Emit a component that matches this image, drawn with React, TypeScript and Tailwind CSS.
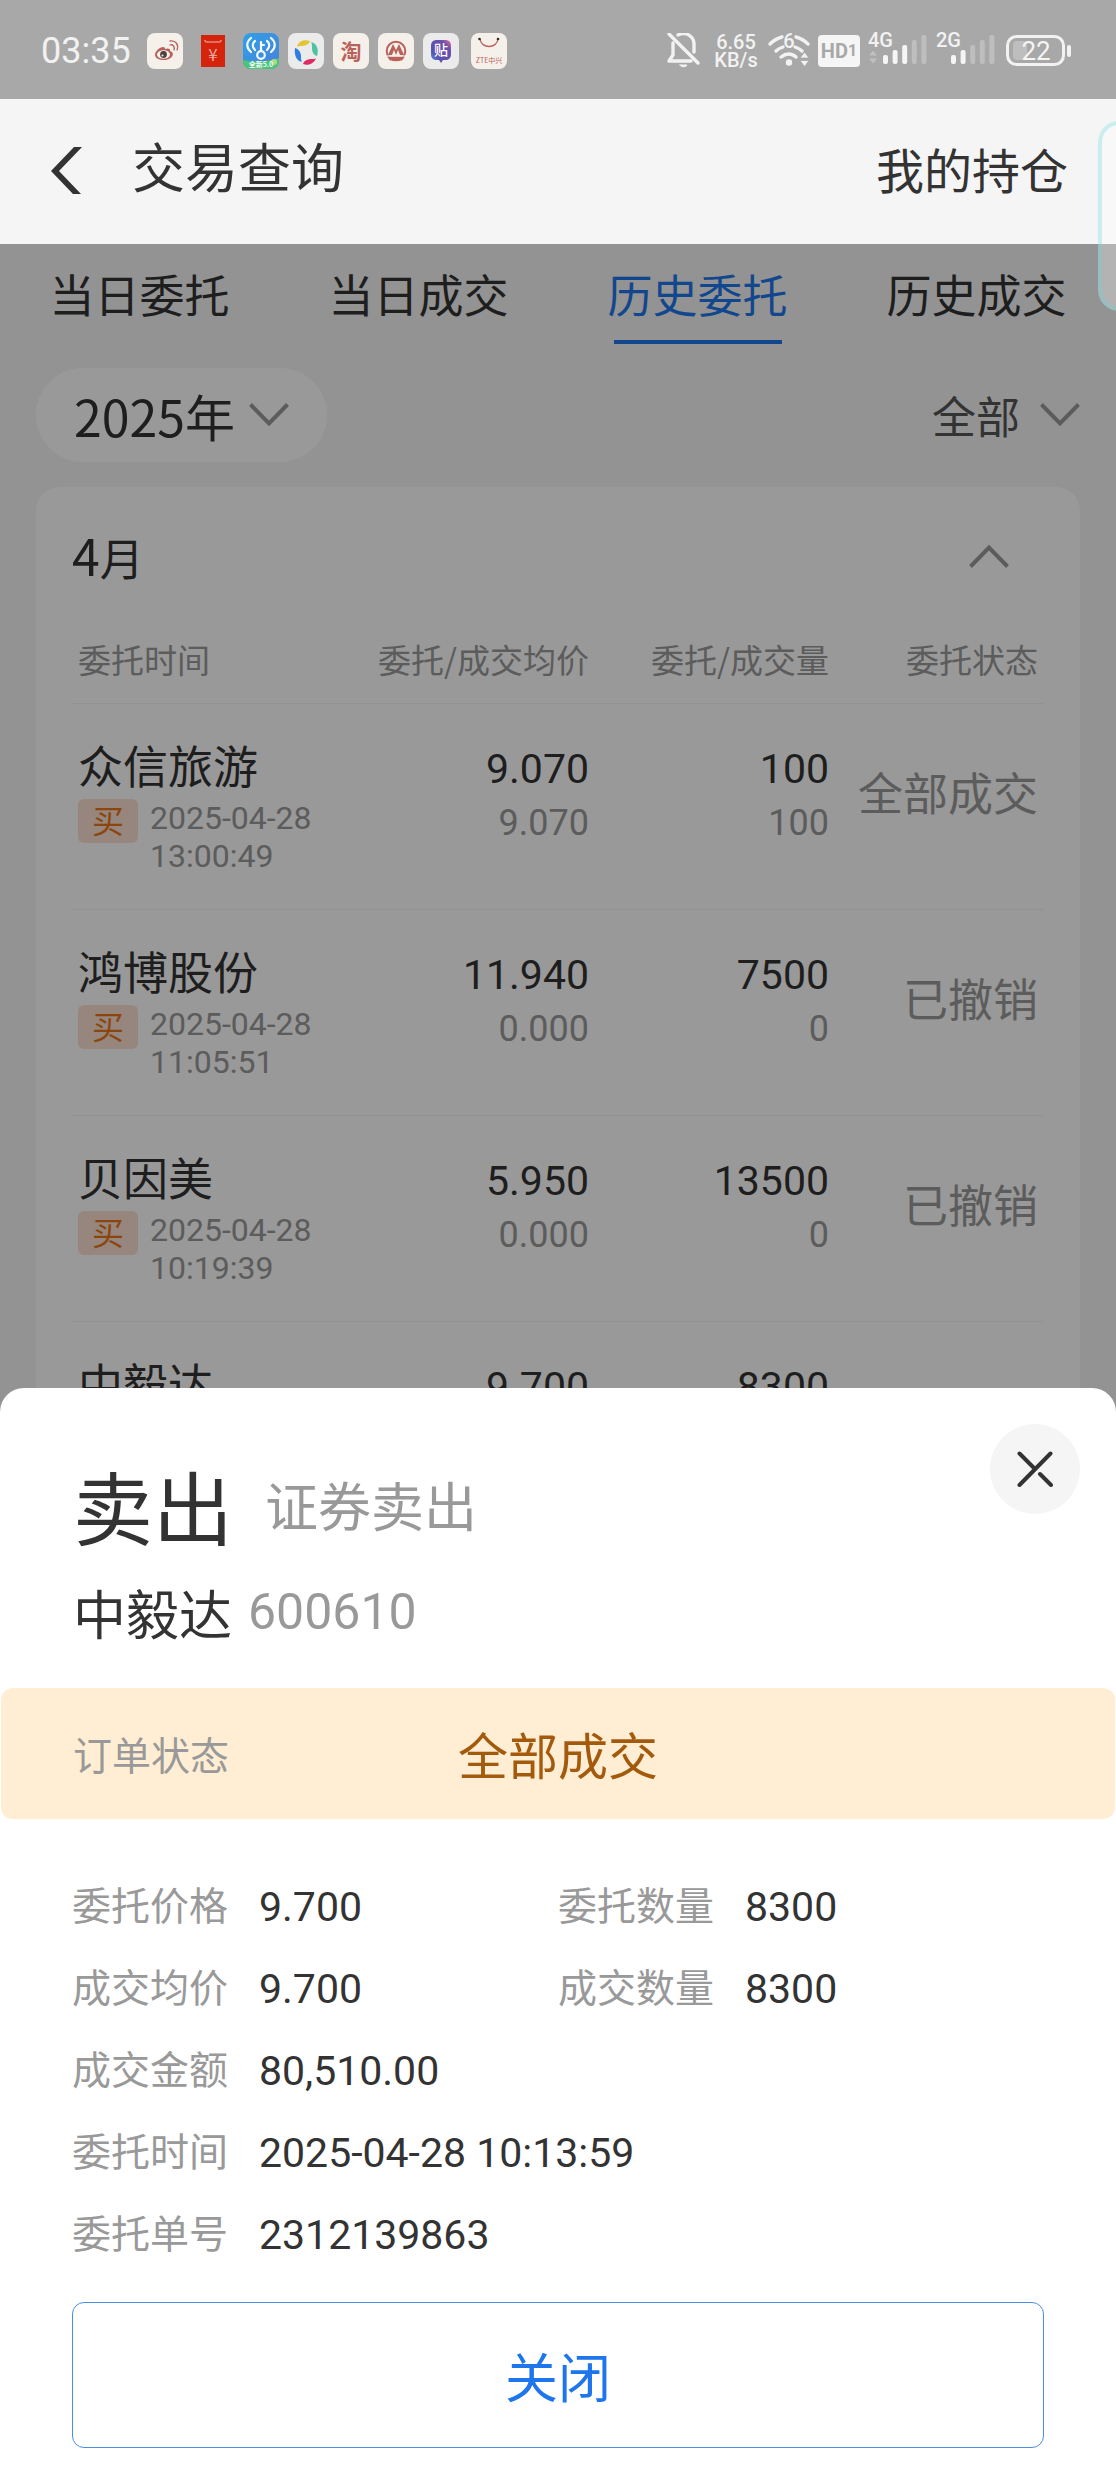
import React, { useState } from 'react';

type Order = {
    name: string;
    date: string;
    time: string;
    price: string;
    avgPrice: string;
    amount: string;
    filled: string;
    status: string;
};

const TABS = ['当日委托', '当日成交', '历史委托', '历史成交'];

const ORDERS: Order[] = [
    { name: '众信旅游', date: '2025-04-28', time: '13:00:49', price: '9.070', avgPrice: '9.070', amount: '100', filled: '100', status: '全部成交' },
    { name: '鸿博股份', date: '2025-04-28', time: '11:05:51', price: '11.940', avgPrice: '0.000', amount: '7500', filled: '0', status: '已撤销' },
    { name: '贝因美', date: '2025-04-28', time: '10:19:39', price: '5.950', avgPrice: '0.000', amount: '13500', filled: '0', status: '已撤销' },
    { name: '中毅达', date: '2025-04-28', time: '10:13:59', price: '9.700', avgPrice: '9.700', amount: '8300', filled: '8300', status: '全部成交' },
];

const DETAILS = [
    { label: '委托价格', value: '9.700' },
    { label: '委托数量', value: '8300' },
    { label: '成交均价', value: '9.700' },
    { label: '成交数量', value: '8300' },
    { label: '成交金额', value: '80,510.00', wide: true },
    { label: '委托时间', value: '2025-04-28 10:13:59', wide: true },
    { label: '委托单号', value: '2312139863', wide: true },
];

const AppIcons: React.FC = () => (
    <div className="flex items-center gap-[9px]">
        <svg className="h-9 w-9" viewBox="0 0 36 36">
            <rect width="36" height="36" rx="8" fill="#f6f0ea" />
            <path d="M8 22c0-4 5-8 8-8 2 0 2 1 2 2 2-1 6-1 5 2 6 2 2 9-6 9-5 0-9-2-9-5z" fill="#b9625c" />
            <ellipse cx="16.500" cy="21.500" rx="6.500" ry="4.300" fill="#f6f0ea" />
            <circle cx="16.500" cy="21.500" r="3.400" fill="#4b4241" />
            <circle cx="15.500" cy="22.500" r="1" fill="#f6f0ea" />
            <path d="M23 12c3-1 5 2 4 5M23 8c6-1 9 4 7 9" fill="none" stroke="#b9625c" strokeWidth="1.300" strokeLinecap="round" />
        </svg>
        <svg className="h-9 w-[42px]" viewBox="0 0 42 36">
            <rect x="9" y="2" width="24" height="32" fill="#d6230b" />
            <path d="M13 7c0 1.500 1 2 2 2h12c1 0 2-.5 2-2" fill="none" stroke="#e08a80" strokeWidth="1.600" />
            <text x="21" y="28" textAnchor="middle" fontSize="17" fontFamily='"Noto Sans CJK SC", sans-serif' fill="#e5a79f">¥</text>
        </svg>
        <svg className="h-9 w-9" viewBox="0 0 36 36">
            <defs>
                <linearGradient id="wifiSky" x1="0" y1="0" x2="1" y2="1">
                    <stop offset="0" stopColor="#2fa0e6" />
                    <stop offset="1" stopColor="#4a80d8" />
                </linearGradient>
                <clipPath id="wifiClip"><rect width="36" height="36" rx="8" /></clipPath>
            </defs>
            <g clipPath="url(#wifiClip)">
                <rect width="36" height="36" fill="url(#wifiSky)" />
                <path d="M0 27c8 2 26 2 36-2v11H0z" fill="#4cc578" />
                <circle cx="31" cy="29" r="3" fill="#a9dc88" />
            </g>
            <g fill="none" stroke="#f4fafd" strokeWidth="2.200" strokeLinecap="round">
                <circle cx="18" cy="22" r="3.800" />
                <path d="M18 18V9M18 12h3M12 8c-3 2-3 6 0 9M8 5c-5 4-5 10 0 14M24 8c3 2 3 6 0 9M28 5c5 4 5 10 0 14" />
            </g>
            <text x="18" y="34" textAnchor="middle" fontSize="7" fontWeight="700" fontFamily='"Noto Sans CJK SC", sans-serif' fill="#f4fafd">全新5.0</text>
        </svg>
        <svg className="h-9 w-9" viewBox="0 0 36 36">
            <rect width="36" height="36" rx="8" fill="#ebebeb" />
            <path d="M9 14c1-6 7-8 13-6-1 4-6 5-9 5-2 0-3 0-4 1z" fill="#e3c433" />
            <path d="M23 9c6 1 8 8 6 14-4-1-5-5-5-8 0-3 0-4-1-6z" fill="#4ec3a4" />
            <path d="M28 25c-2 6-8 8-13 6 1-4 6-5 9-5 2 0 3 0 4-1z" fill="#dc2c63" />
            <path d="M14 29c-6-1-8-8-7-14 4 1 6 5 6 8 0 3 0 4 1 6z" fill="#2d7fe0" />
        </svg>
        <svg className="h-9 w-9" viewBox="0 0 36 36">
            <rect width="36" height="36" rx="8" fill="#f6f0ea" />
            <text x="18" y="26" textAnchor="middle" fontSize="21" fontWeight="700" fontFamily='"Noto Sans CJK SC", sans-serif' fill="#b9625c">淘</text>
        </svg>
        <svg className="h-9 w-9" viewBox="0 0 36 36">
            <rect width="36" height="36" rx="8" fill="#f6f0ea" />
            <circle cx="18" cy="18" r="9.300" fill="none" stroke="#b9625c" strokeWidth="2" />
            <path d="M10 22l5-11 3 6 3-6 5 11h-4l-2-5-2 5-2-5-2 5z" fill="#b9625c" />
            <path d="M9 23.500h18l-3 4H12z" fill="#b9625c" />
            <path d="M9 23h19" stroke="#f6f0ea" strokeWidth="1.200" />
        </svg>
        <svg className="h-9 w-9" viewBox="0 0 36 36">
            <defs>
                <linearGradient id="tieba" x1="0" y1="1" x2="1" y2="0">
                    <stop offset="0" stopColor="#3fa6f0" />
                    <stop offset=".3" stopColor="#5c4fae" />
                    <stop offset=".75" stopColor="#6a4fae" />
                    <stop offset="1" stopColor="#ec6a94" />
                </linearGradient>
            </defs>
            <rect width="36" height="36" rx="8" fill="#ebebeb" />
            <path d="M14 7h8c4 0 6 2 6 6v8c0 4-2 6-6 6h-2l-2 3-2-3h-2c-4 0-6-2-6-6v-8c0-4 2-6 6-6z" fill="url(#tieba)" />
            <text x="18" y="22" textAnchor="middle" fontSize="14" fontWeight="500" fontFamily='"Noto Sans CJK SC", sans-serif' fill="#fff">贴</text>
        </svg>
        <svg className="ml-[3px] h-9 w-9" viewBox="0 0 36 36">
            <rect width="36" height="36" rx="8" fill="#f6f0ea" />
            <path d="M9 6c1 10 17 10 18 0" fill="none" stroke="#b9625c" strokeWidth="1.300" />
            <circle cx="8.500" cy="6" r="1.300" fill="#2b2b2b" />
            <circle cx="27" cy="6" r="1.300" fill="#2b2b2b" />
            <text x="18" y="30" textAnchor="middle" fontSize="7" fontFamily='"Noto Sans CJK SC", sans-serif' fill="#b9625c">ZTE中兴</text>
        </svg>
    </div>
);

const Signal: React.FC<{ label: string; level: number; arrows?: boolean }> = ({ label, level, arrows }) => (
    <svg className="h-9 w-[60px] overflow-visible" viewBox="0 0 60 36">
        <text x="0" y="14" fontSize="20" fontWeight="500" fontFamily="Roboto, sans-serif" fill="#f2f2f2">{label}</text>
        {arrows && <path d="M1 22.500l4-5 4 5zM1 25.500h8l-4 5z" fill="#c0c0c0" />}
        {[0, 1, 2, 3, 4].map(i => (
            <rect key={i} x={15 + i * 9.6} y={22 - i * 5} width="5" height={9 + i * 5} rx="2" fill={i < level ? '#f5f5f5' : '#bebebe'} />
        ))}
    </svg>
);

const StatusBar: React.FC = () => (
    <div className="flex items-center justify-between bg-[#a8a8a8] pt-[33px] pr-11 pb-[30px] pl-[41px] text-[#f2f2f2]">
        <div className="flex items-center gap-4">
            <time className="font-[Roboto,sans-serif] text-[36px] leading-9">03:35</time>
            <AppIcons />
        </div>
        <div className="flex items-center gap-2">
            <svg className="h-9 w-[37px]" viewBox="0 0 37 36" fill="none" stroke="#f2f2f2" strokeWidth="3.400" strokeLinecap="round" strokeLinejoin="round">
                <path d="M2 1l29 29M6 10v12l-4 6h22M11 2c9-4 16 2 16 9v8" />
                <path d="M13 32h7c-1 2.500-6 2.500-7 0z" fill="#f2f2f2" strokeWidth="1" />
            </svg>
            <div className="w-12 text-center font-[Roboto,sans-serif] text-[20px] leading-[18px] font-medium">
                <p>6.65</p>
                <p>KB/s</p>
            </div>
            <svg className="h-9 w-[42px] overflow-visible" viewBox="0 0 42 36">
                <g fill="none" stroke="#f2f2f2" strokeWidth="3.400" strokeLinecap="round">
                    <path d="M2 11C6 7 10 5 14 4M28 4c4 1 8 3 12 7M8 18c2-2 4-3 7-4M27 14c3 1 5 2 7 4M13 24c5-4 11-4 15 0" />
                </g>
                <circle cx="21" cy="29.500" r="3.200" fill="#f2f2f2" />
                <text x="21" y="15" textAnchor="middle" fontSize="20" fontWeight="500" fontFamily="Roboto, sans-serif" fill="#f2f2f2">6</text>
                <path d="M32 25l4.500-6 4.500 6zM32 27.500h9l-4.500 6z" fill="#f2f2f2" stroke="#a8a8a8" strokeWidth=".8" />
            </svg>
            <span className="flex h-8 w-[42px] items-center justify-center rounded bg-[#f5f5f5] font-[Roboto,sans-serif] text-[20px] leading-8 font-bold text-[#a8a8a8]">
                HD<span className="text-[16px]">1</span>
            </span>
            <Signal label="4G" level={3} arrows />
            <Signal label="2G" level={2} />
            <svg className="h-9 w-[68px]" viewBox="0 0 68 36">
                <rect x="3.500" y="3.500" width="56" height="28" rx="9" fill="none" stroke="#f2f2f2" strokeWidth="3" />
                <rect x="9" y="8" width="14" height="19" rx="4" fill="#bebebe" />
                <rect x="63" y="12" width="4" height="12" rx="2" fill="#f2f2f2" />
                <text x="32" y="27" textAnchor="middle" fontSize="26" fontFamily="Roboto, sans-serif" fill="#f5f5f5">22</text>
            </svg>
        </div>
    </div>
);

const Chevron: React.FC<{ className?: string }> = ({ className }) => (
    <svg className={`pointer-events-none h-6 w-10 ${className ?? ''}`} viewBox="0 0 40 24" fill="none" stroke="#999" strokeWidth="4">
        <path d="M1.500 1.500L20 20.500 38.500 1.500" />
    </svg>
);

const OrderRow: React.FC<{ order: Order }> = ({ order }) => (
    <tr className="border-b border-[#f4f4f4] align-top">
        <td className="pt-[34px] pb-[34px] pl-[6px]">
            <p className="text-[45px] leading-[54px]">{order.name}</p>
            <div className="mt-[7px] flex gap-3">
                <span className="h-11 w-[60px] rounded-md bg-[#fadfd0] text-center text-[32px] leading-[40px] text-[#e8761a]">买</span>
                <p className="font-[Roboto,sans-serif] text-[32px] leading-[38px] text-[#999]">
                    {order.date}
                    <br />
                    {order.time}
                </p>
            </div>
        </td>
        <td className="pt-[38px] pr-[2px] text-right font-[Roboto,sans-serif]">
            <p className="text-[41px] leading-[54px]">{order.price}</p>
            <p className="text-[36px] leading-[54px] text-[#999]">{order.avgPrice}</p>
        </td>
        <td className="pt-[38px] pr-[2px] text-right font-[Roboto,sans-serif]">
            <p className="text-[41px] leading-[54px]">{order.amount}</p>
            <p className="text-[36px] leading-[54px] text-[#999]">{order.filled}</p>
        </td>
        <td className="pt-[60px] pr-[6px] text-right text-[45px] leading-[56px] whitespace-nowrap text-[#999]">{order.status}</td>
    </tr>
);

const HistoryPage: React.FC = () => {
    const [activeTab, setActiveTab] = useState('历史委托');
    const [isExpanded, setIsExpanded] = useState(true);

    return (
        <main className="relative flex-1 bg-[#f5f5f5]">
            <nav className="grid grid-cols-4">
                {TABS.map(tab => (
                    <button
                        key={tab}
                        onClick={() => setActiveTab(tab)}
                        className={`flex flex-col items-center pt-5 text-[45px] leading-[60px] ${activeTab === tab ? 'text-[#1f76ec]' : ''}`}
                    >
                        {tab}
                        <span className={`mt-4 h-1 w-[168px] ${activeTab === tab ? 'bg-[#1f76ec]' : ''}`} />
                    </button>
                ))}
            </nav>

            <div className="mt-6 flex items-center justify-between px-9">
                <label className="flex items-center gap-[14px] rounded-full bg-white px-[38px] py-[15px]">
                    <select aria-label="年份" className="appearance-none text-[50px] leading-[64px]">
                        <option>2025年</option>
                    </select>
                    <Chevron />
                </label>
                <label className="flex items-center gap-5">
                    <select aria-label="筛选" className="appearance-none text-[44px] leading-[64px] text-[#555]">
                        <option>全部</option>
                    </select>
                    <Chevron />
                </label>
            </div>

            <section className="mx-9 mt-[25px] rounded-t-3xl bg-white px-9">
                <button onClick={() => setIsExpanded(!isExpanded)} className="flex w-full items-center justify-between pt-[35px] pr-[35px] pb-[46px]">
                    <span className="text-[44px] leading-[64px]">
                        <span className="text-[50px]">4</span>月
                    </span>
                    <Chevron className={isExpanded ? 'rotate-180' : ''} />
                </button>
                {isExpanded && (
                    <table className="w-full table-fixed">
                        <colgroup>
                            <col />
                            <col className="w-60" />
                            <col className="w-60" />
                            <col className="w-[213px]" />
                        </colgroup>
                        <thead>
                            <tr className="border-b border-[#f4f4f4] text-[33px] leading-[48px] whitespace-nowrap text-[#999]">
                                <th className="pb-5 pl-[6px] text-left font-normal">委托时间</th>
                                <th className="pr-[2px] pb-5 text-right font-normal">委托/成交均价</th>
                                <th className="pr-[2px] pb-5 text-right font-normal">委托/成交量</th>
                                <th className="pr-[6px] pb-5 text-right font-normal">委托状态</th>
                            </tr>
                        </thead>
                        <tbody>
                            {ORDERS.map(order => (
                                <OrderRow key={order.name} order={order} />
                            ))}
                        </tbody>
                    </table>
                )}
            </section>
            <div className="absolute inset-0 bg-black/40" />
        </main>
    );
};

const OrderSheet: React.FC<{ onClose: () => void }> = ({ onClose }) => (
    <section role="dialog" aria-label="委托详情" className="fixed inset-x-0 bottom-0 rounded-t-3xl bg-white pt-[76px] pb-8">
        <button onClick={onClose} aria-label="关闭详情" className="absolute top-9 right-9 grid h-[90px] w-[90px] place-items-center rounded-full bg-[#f5f5f5]">
            <svg className="h-9 w-9" viewBox="0 0 36 36" fill="none" stroke="#333" strokeWidth="4" strokeLinecap="round">
                <path d="M2.500 2.500L17 17M23 23l11 11M33.500 2.500L2.500 34" />
            </svg>
        </button>

        <div className="px-[73px]">
            <h2 className="flex items-center gap-8 text-[80px] leading-[80px]">
                卖出
                <span className="text-[53px] text-[#999]">证券卖出</span>
            </h2>
            <p className="mt-[38px] flex items-center gap-4 text-[53px] leading-[60px]">
                中毅达
                <span className="font-[Roboto,sans-serif] text-[50px] text-[#999]">600610</span>
            </p>
        </div>

        <div className="mx-px mt-[46px] grid grid-cols-3 items-center rounded-xl bg-[#ffeed3] px-[72px] py-[33px] leading-[65px]">
            <span className="text-[39px] text-[#999]">订单状态</span>
            <span className="text-center text-[50px] text-[#a35a0d]">全部成交</span>
        </div>

        <dl className="mt-[58px] grid grid-cols-2 gap-y-[26px] px-[72px] leading-[52px]">
            {DETAILS.map(item => (
                <div key={item.label} className={`flex gap-[31px] ${item.wide ? 'col-span-2' : ''}`}>
                    <dt className="text-[39px] text-[#999]">{item.label}</dt>
                    <dd className="pt-1 font-[Roboto,sans-serif] text-[41px]">{item.value}</dd>
                </div>
            ))}
        </dl>

        <div className="mt-[41px] px-[72px]">
            <button onClick={onClose} className="w-full rounded-xl border border-[#4a8ee6] py-10 text-[53px] leading-[64px] text-[#1f76ec]">
                关闭
            </button>
        </div>
    </section>
);

export default function App() {
    const [isOpen, setIsOpen] = useState(true);

    return (
        <div className="relative flex min-h-screen flex-col overflow-hidden font-['Noto_Sans_CJK_SC',sans-serif] text-[#333]">
            <StatusBar />
            <header className="flex items-center justify-between bg-[#f5f5f5] pt-[31px] pr-12 pb-11 pl-[50px]">
                <div className="flex items-center gap-[50px]">
                    <button aria-label="返回">
                        <svg className="mt-[10px] h-[47px] w-8" viewBox="0 0 32 47" fill="#333">
                            <path d="M24 0h8L9 24l22 23h-8L1 24z" />
                        </svg>
                    </button>
                    <h1 className="text-[53px] leading-[60px]">交易查询</h1>
                </div>
                <a href="#positions" className="pt-[6px] text-[48px] leading-[64px]">我的持仓</a>
            </header>
            <HistoryPage />
            {/* side panel handle peeking in from the right edge */}
            <div className="absolute top-[121px] -right-6 h-[190px] w-[42px] rounded-[30px] border-4 border-[#5fd6d6]/30 bg-white/30" />
            {isOpen && <OrderSheet onClose={() => setIsOpen(false)} />}
        </div>
    );
}
